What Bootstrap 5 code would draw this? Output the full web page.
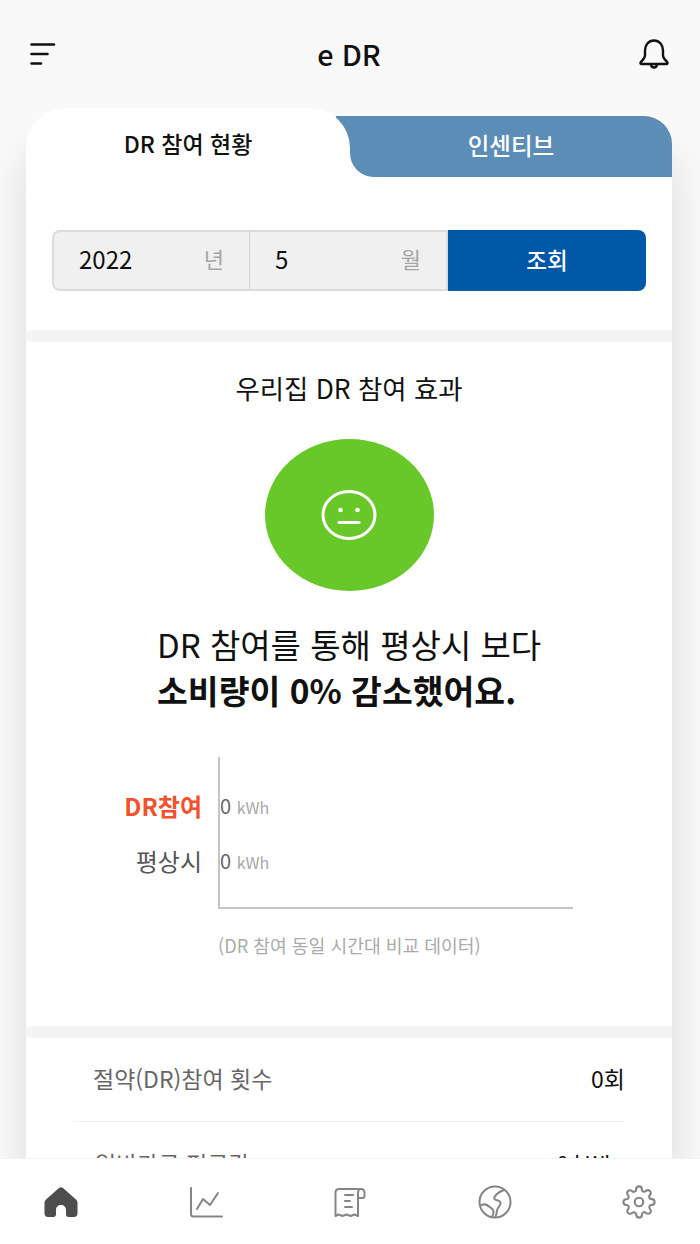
<!DOCTYPE html>
<html lang="ko">
<head>
  <meta charset="UTF-8">
  <title>e DR</title>
  <meta name="viewport" content="width=device-width, initial-scale=1">
  <link href="https://cdn.jsdelivr.net/npm/bootstrap@5.3.2/dist/css/bootstrap.min.css" rel="stylesheet">
  <style>
    body { background: #f9f9f9; font-family: "Noto Sans CJK KR", "Noto Sans", sans-serif; color: #111; }
    .app-shell { height: 1244px; overflow: hidden; }
    .app-top { height: 108px; padding: 0 30px; flex: none; }
    .app-top h1 { font-size: 28.8px; font-weight: 500; margin: 0; padding-left: 4px; }
    .app-main { flex: 1 1 0; min-height: 0; overflow: hidden; padding: 0 28px 0 26px; }
    .sheet { box-shadow: 0 50px 40px rgba(0,0,0,.12); }
    .tab-on { width: 324px; height: 69px; background: #fff; border-radius: 40px 40px 0 0; font-size: 23px; font-weight: 500; padding-top: 2px; position: relative; z-index: 1; }
    .tab-wrap { flex: 1; margin-top: 8px; height: 61px; background: #fff; border-top-right-radius: 28px; }
    .tab-off { height: 61px; background: #5b8db6; color: #fff; font-size: 23.500px; font-weight: 500; padding-bottom: 2px; border-radius: 0 28px 0 24px; position: relative; }
    .tab-off::before { content: ""; position: absolute; left: -14px; top: 0; width: 15px; height: 34px; background: #5b8db6; }
    .sheet-part { background: #fff; }
    .search-part { padding: 53px 26px 39px; }
    .search-box { height: 61px; }
    .search-cell { width: 198px; background: #f0f0f0; border: 2px solid #dcdcdc; padding: 0 25px 4px; font-size: 24px; }
    .search-cell + .search-cell { border-left: 0; width: 198px; }
    .search-cell:first-child { border-radius: 8px 0 0 8px; border-right: 1px solid #d4d4d4; }
    .search-cell .unit { color: #a5a5a5; font-size: 22px; }
    .search-btn { flex: 1; background: #0058a6; color: #fff; border-radius: 0 8px 8px 0; font-size: 22.500px; font-weight: 500; border: 0; padding-bottom: 3px; }
    .gap-band { height: 12px; background: #f5f5f5; }
    .effect-part { height: 684px; padding-top: 28px; }
    .effect-title { font-size: 26.400px; line-height: 36px; margin: 0; }
    .face-disc { width: 169px; height: 152px; border-radius: 50%; background: #68c829; margin: 33px auto 0; }
    .effect-msg { font-size: 33px; line-height: 46px; margin: 30px 0 0; padding-left: 131px; text-align: left; }
    .effect-msg strong { font-weight: 700; font-size: 33.500px; display: block; }
    .chart-wrap { margin-top: 44px; padding-left: 82px; }
    .chart-labels { width: 94px; padding-top: 27px; }
    .chart-labels div { height: 55px; line-height: 44px; font-size: 24px; text-align: right; color: #555; white-space: nowrap; }
    .chart-labels .dr-on { color: #f4502c; font-weight: 700; }
    .chart-plot { width: 355px; height: 152px; border-left: 2px solid #c4c4c4; border-bottom: 2px solid #c4c4c4; padding-top: 27px; }
    .chart-plot div { height: 55px; line-height: 44px; font-size: 20px; color: #666; white-space: nowrap; }
    .chart-plot span { font-size: 16px; color: #a8a8a8; }
    .chart-note { font-size: 18.200px; color: #aaa; margin: 24px 0 0 192px; line-height: 24px; }
    .stat-part { padding: 0 47px; }
    .stat-row { height: 84px; font-size: 23px; color: #666; border-bottom: 1px solid #f0f0f0; padding-bottom: 2px; }
    .stat-row b { font-weight: 400; color: #111; }
    .stat-row-next { border-bottom: 0; align-items: flex-start !important; padding: 24px 8px 0 22px; }
    .stat-row-next b { font-size: 21px; line-height: 34px; }
    .stat-row:first-child { padding-left: 20px; }
    .app-nav { height: 86px; flex: none; background: #fff; border-top: 1px solid #f3f3f3; padding: 0 44px; }
    .app-nav svg { display: block; }
  </style>
</head>
<body>

<div class="app-shell d-flex flex-column">
  <!-- header -->
  <header class="app-top d-flex align-items-center justify-content-between">
    <svg width="26" height="24" viewBox="0 0 26 24" fill="none" stroke="#111" stroke-width="2.600" stroke-linecap="round"><path d="M1.500 2.500H24M1.500 12H17.500M1.500 21.500H11"/></svg>
    <h1>e DR</h1>
    <svg width="32" height="32" viewBox="0 0 32 32" fill="none" stroke="#111" stroke-width="2.400" stroke-linejoin="round"><path d="M16 2.500c-5.600 0-9 4.500-9 10v5c0 2.500-2.400 4.500-4.300 6.800-.6.700-.1 1.700.8 1.700h25c.9 0 1.400-1 .8-1.700C27.400 22 25 20 25 17.500v-5c0-5.500-3.400-10-9-10z"/><path d="M13 26.500c.2 1.800 1.400 3 3 3s2.800-1.200 3-3"/></svg>
  </header>

  <main class="app-main">
    <div class="sheet">
      <!-- tabs -->
      <div class="d-flex">
        <div class="tab-on d-flex align-items-center justify-content-center">DR 참여 현황</div>
        <div class="tab-wrap"><div class="tab-off d-flex align-items-center justify-content-center">인센티브</div></div>
      </div>

      <!-- search -->
      <div class="sheet-part search-part">
        <div class="search-box d-flex">
          <div class="search-cell d-flex align-items-center justify-content-between"><span>2022</span><span class="unit">년</span></div>
          <div class="search-cell d-flex align-items-center justify-content-between"><span>5</span><span class="unit">월</span></div>
          <button class="search-btn" type="button">조회</button>
        </div>
      </div>
      <div class="gap-band"></div>

      <!-- effect -->
      <div class="sheet-part effect-part text-center">
        <p class="effect-title">우리집 DR 참여 효과</p>
        <div class="face-disc d-flex align-items-center justify-content-center">
          <svg width="56" height="50" viewBox="0 0 56 50" fill="none" stroke="#fff" stroke-width="3"><ellipse cx="28" cy="25" rx="26" ry="23.500"/><circle cx="19.500" cy="20" r="2.300" fill="#fff" stroke="none"/><circle cx="36.500" cy="20" r="2.300" fill="#fff" stroke="none"/><path d="M18 32.500H38" stroke-linecap="round"/></svg>
        </div>
        <p class="effect-msg">DR 참여를 통해 평상시 보다<strong>소비량이 0% 감소했어요.</strong></p>
        <div class="chart-wrap d-flex text-start">
          <div class="chart-labels">
            <div class="dr-on">DR참여</div>
            <div>평상시</div>
          </div>
          <div class="chart-plot ms-3 flex-shrink-0">
            <div>0 <span>kWh</span></div>
            <div>0 <span>kWh</span></div>
          </div>
        </div>
        <p class="chart-note text-start">(DR 참여 동일 시간대 비교 데이터)</p>
      </div>
      <div class="gap-band"></div>

      <!-- stats -->
      <div class="sheet-part stat-part">
        <div class="stat-row d-flex align-items-center justify-content-between"><span>절약(DR)참여 횟수</span><b>0회</b></div>
        <div class="stat-row stat-row-next d-flex justify-content-between"><span>일반가구 평균값</span><b>0 kWh</b></div>
      </div>
    </div>
  </main>

  <!-- bottom nav -->
  <nav class="app-nav d-flex align-items-center justify-content-between">
    <svg width="34" height="32" viewBox="0 0 34 32" fill="#4d4d4d"><path d="M15 2 2 13.500C1 14.500.5 15.500.5 17v10.500c0 2 1.500 3.500 3.500 3.500h5.500c1.500 0 2.500-1 2.500-2.500V24c0-3 2-5 5-5s5 2 5 5v4.500c0 1.500 1 2.500 2.500 2.500H30c2 0 3.500-1.500 3.500-3.500V17c0-1.500-.5-2.500-1.500-3.500L19 2c-1.300-1-2.700-1-4 0z"/></svg>
    <svg width="34" height="32" viewBox="0 0 34 32" fill="none" stroke="#858585" stroke-width="2" stroke-linejoin="round" stroke-linecap="round"><path d="M2 2v26c0 1.500.8 2.500 2.500 2.500H33"/><path d="M8 23l6-10 7 6 8-12"/></svg>
    <svg width="34" height="34" viewBox="0 0 34 34" fill="none" stroke="#858585" stroke-width="2" stroke-linejoin="round" stroke-linecap="round"><path d="M29 4H6C3.500 4 2.500 5 2.500 7.500V31l3-1.500 4 1.500 4-1.500 4 1.500 4-1.500 3.500 1.500V8c0-2.500 1-4 3-4s3.500 1.500 3.500 4v3c0 1.500-1 2-2 2h-4"/><path d="M12 10h8M12 16h5M12 22h7"/></svg>
    <svg width="34" height="34" viewBox="0 0 34 34" fill="none" stroke="#858585" stroke-width="2" stroke-linejoin="round"><circle cx="17" cy="17" r="15.500"/><path d="M26 5c-3 1-5 2-7 4s-3.500 3-2.500 5 5 .5 6 3.500-3 4-3.500 8c-.2 2-.5 4-1.500 6.500M2 21c3.500-2.500 7-1.500 9 .5s4 1.500 4.500 5c.3 2-.5 3.500-1.500 5.500"/></svg>
    <svg width="34" height="34" viewBox="0 0 24 24" fill="none" stroke="#858585" stroke-width="1.500" stroke-linejoin="round" stroke-linecap="round"><circle cx="12" cy="12" r="3"/><path d="M19.400 15a1.650 1.650 0 0 0 .33 1.820l.06.06a2 2 0 0 1 0 2.830 2 2 0 0 1-2.830 0l-.06-.06a1.650 1.650 0 0 0-1.820-.33 1.650 1.650 0 0 0-1 1.510V21a2 2 0 0 1-2 2 2 2 0 0 1-2-2v-.09A1.650 1.650 0 0 0 9 19.400a1.650 1.650 0 0 0-1.820.33l-.06.06a2 2 0 0 1-2.830 0 2 2 0 0 1 0-2.830l.06-.06a1.650 1.650 0 0 0 .33-1.820 1.650 1.650 0 0 0-1.510-1H3a2 2 0 0 1-2-2 2 2 0 0 1 2-2h.09A1.650 1.650 0 0 0 4.600 9a1.650 1.650 0 0 0-.33-1.820l-.06-.06a2 2 0 0 1 0-2.830 2 2 0 0 1 2.830 0l.06.06a1.650 1.650 0 0 0 1.820.33H9a1.650 1.650 0 0 0 1-1.510V3a2 2 0 0 1 2-2 2 2 0 0 1 2 2v.09a1.650 1.650 0 0 0 1 1.510 1.650 1.650 0 0 0 1.820-.33l.06-.06a2 2 0 0 1 2.830 0 2 2 0 0 1 0 2.830l-.06.06a1.650 1.650 0 0 0-.33 1.820V9a1.650 1.650 0 0 0 1.510 1H21a2 2 0 0 1 2 2 2 2 0 0 1-2 2h-.09a1.650 1.650 0 0 0-1.510 1z"/></svg>
  </nav>
</div>

<script src="https://cdn.jsdelivr.net/npm/bootstrap@5.3.2/dist/js/bootstrap.bundle.min.js"></script>
</body>
</html>
